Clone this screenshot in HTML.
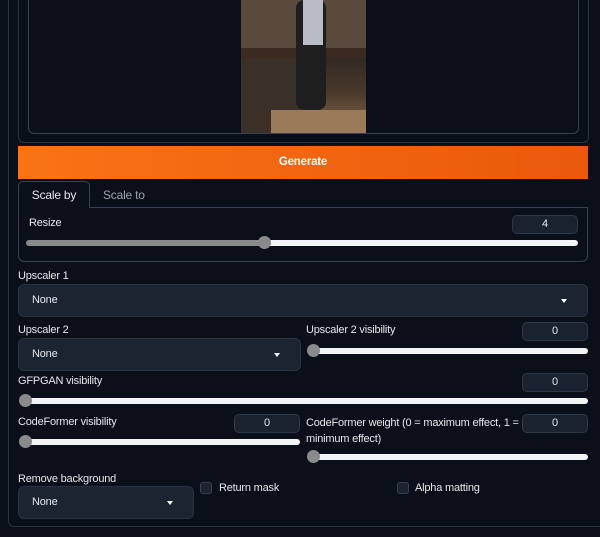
<!DOCTYPE html>
<html><head><style>
*{box-sizing:border-box;margin:0;padding:0}
body{width:600px;height:537px;background:#0b0f19;font-family:"Liberation Sans",sans-serif;color:#e5e7eb;position:relative;overflow:hidden;font-size:11px;letter-spacing:-0.2px}
.a{position:absolute}
.outer{left:8px;top:-10px;width:620px;height:537px;border:1px solid #2b3340;border-radius:6px}
.inner{left:18px;top:-10px;width:571px;height:153px;border:1px solid #2b3340;border-radius:6px}
.imgbox{left:28px;top:-10px;width:551px;height:144px;border:1px solid #374151;border-radius:6px}
.img{left:241px;top:0;width:125px;height:133px;background:linear-gradient(180deg,#3a3028 0%,#2e2620 40%,#4a3a2c 70%,#8a6a4a 100%);overflow:hidden}
.gen{left:18px;top:146px;width:570px;height:33px;background:linear-gradient(90deg,#f97316,#ea580c);color:#fff;font-weight:bold;font-size:11.5px;text-align:center;line-height:33px}
.tab{left:18px;top:181px;width:72px;height:27px;border:1px solid #374151;border-bottom:none;border-radius:5px 5px 0 0;background:#0b0f19;font-size:12px;text-align:center;line-height:27px;z-index:2}
.panel{left:18px;top:207px;width:570px;height:55px;border:1px solid #374151;border-radius:0 0 6px 6px}
.num{height:19px;background:#1a2230;border:1px solid #2f3846;border-radius:5px;text-align:center;line-height:17px;font-size:11px}
.sl{height:6px;background:#f3f4f6;border-radius:3px}
.th{width:13px;height:13px;border-radius:50%;background:#8a8a8a;top:-4px}
.dd{background:#1c2331;border:1px solid #2b3340;border-radius:6px;height:33px;line-height:31px;padding-left:13px;font-size:11px}
.dd:after{content:"";position:absolute;right:20px;top:14px;border:3px solid transparent;border-top:4px solid #fff}
.cb{width:12px;height:12px;background:#1c2331;border:1px solid #374151;border-radius:3px}
</style></head><body>
<div class="a outer"></div>
<div class="a inner"></div>
<div class="a imgbox"></div>
<div class="a img">
<div class="a" style="left:0;top:0;width:125px;height:50px;background:#5a4a3e"></div>
<div class="a" style="left:0;top:48px;width:125px;height:10px;background:#3a2a20"></div>
<div class="a" style="left:0;top:58px;width:60px;height:75px;background:#3a3028"></div>
<div class="a" style="left:55px;top:0;width:30px;height:110px;background:#1e1e1e;border-radius:8px"></div>
<div class="a" style="left:62px;top:0;width:20px;height:45px;background:#b8bcc4"></div>
<div class="a" style="left:30px;top:110px;width:95px;height:23px;background:#9a7a58"></div>
</div>
<div class="a gen">Generate</div>
<div class="a tab">Scale by</div>
<div class="a" style="left:103px;top:188px;font-size:12px;color:#9ca3af">Scale to</div>
<div class="a panel"></div>
<div class="a" style="left:29px;top:217px">Resize</div>
<div class="a num" style="left:512px;top:215px;width:66px">4</div>
<div class="a sl" style="left:26px;top:240px;width:552px;background:linear-gradient(90deg,#8a8a8a 43%,#f3f4f6 43%)"><div class="a th" style="left:232px"></div></div>

<div class="a" style="left:18px;top:270px">Upscaler 1</div>
<div class="a dd" style="left:18px;top:284px;width:570px">None</div>

<div class="a" style="left:18px;top:324px">Upscaler 2</div>
<div class="a dd" style="left:18px;top:338px;width:283px">None</div>
<div class="a" style="left:306px;top:324px">Upscaler 2 visibility</div>
<div class="a num" style="left:522px;top:322px;width:66px">0</div>
<div class="a sl" style="left:308px;top:348px;width:280px"><div class="a th" style="left:-1px"></div></div>

<div class="a" style="left:18px;top:375px">GFPGAN visibility</div>
<div class="a num" style="left:522px;top:373px;width:66px">0</div>
<div class="a sl" style="left:20px;top:398px;width:568px"><div class="a th" style="left:-1px"></div></div>

<div class="a" style="left:18px;top:416px">CodeFormer visibility</div>
<div class="a num" style="left:234px;top:414px;width:66px">0</div>
<div class="a sl" style="left:20px;top:439px;width:280px"><div class="a th" style="left:-1px"></div></div>
<div class="a" style="left:306px;top:415px;line-height:16px;width:215px;white-space:nowrap">CodeFormer weight (0 = maximum effect, 1 =<br>minimum effect)</div>
<div class="a num" style="left:522px;top:414px;width:66px">0</div>
<div class="a sl" style="left:308px;top:454px;width:280px"><div class="a th" style="left:-1px"></div></div>

<div class="a" style="left:18px;top:473px">Remove background</div>
<div class="a dd" style="left:18px;top:486px;width:176px">None</div>
<div class="a cb" style="left:200px;top:482px"></div>
<div class="a" style="left:219px;top:482px">Return mask</div>
<div class="a cb" style="left:397px;top:482px"></div>
<div class="a" style="left:415px;top:482px">Alpha matting</div>
</body></html>
